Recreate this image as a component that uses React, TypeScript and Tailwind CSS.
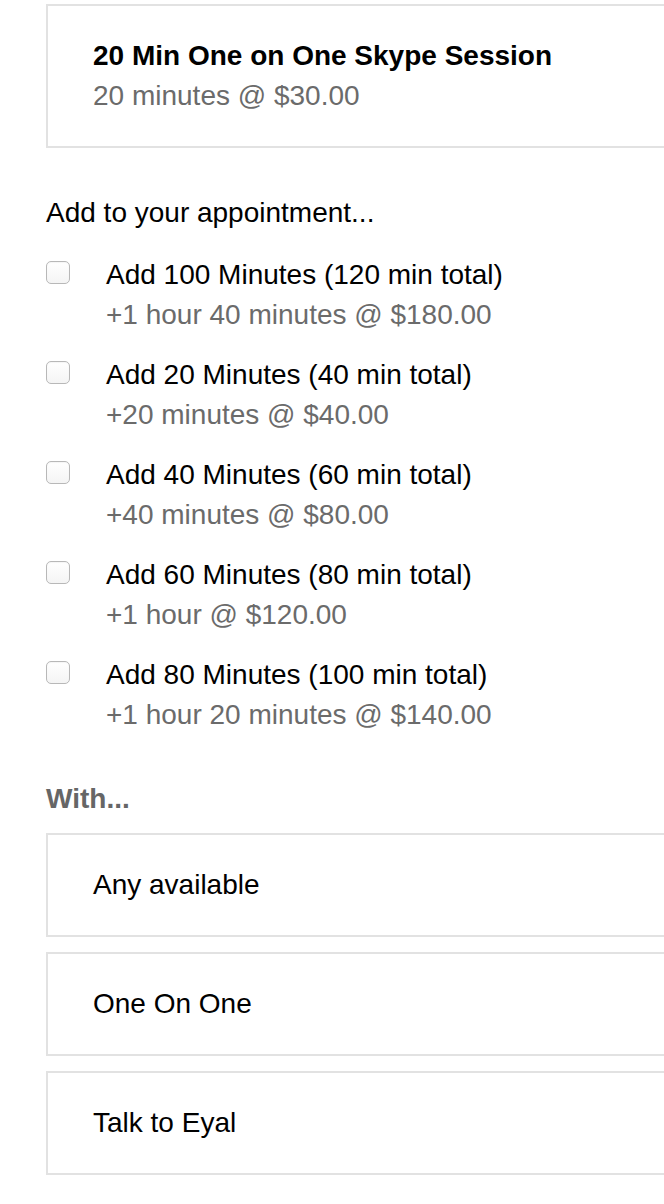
import React from "react";

const addons = [
  { label: "Add 100 Minutes (120 min total)", sub: "+1 hour 40 minutes @ $180.00" },
  { label: "Add 20 Minutes (40 min total)", sub: "+20 minutes @ $40.00" },
  { label: "Add 40 Minutes (60 min total)", sub: "+40 minutes @ $80.00" },
  { label: "Add 60 Minutes (80 min total)", sub: "+1 hour @ $120.00" },
  { label: "Add 80 Minutes (100 min total)", sub: "+1 hour 20 minutes @ $140.00" },
];

const staff = ["Any available", "One On One", "Talk to Eyal"];

export default function App() {
  return (
    <div
      className="w-[664px] min-h-[1204px] overflow-hidden bg-white text-[28px] leading-[40px] text-[#111]"
      style={{ fontFamily: '"Liberation Sans", Arial, Helvetica, sans-serif' }}
    >
      <div className="pl-[46px] pt-[4px]">
        <div className="mr-[-40px] border-2 border-[#e2e2e2] pl-[45px] py-[30px]">
          <div className="font-bold text-black">20 Min One on One Skype Session</div>
          <div className="text-[#6b6b6b]">20 minutes @ $30.00</div>
        </div>

        <div className="mt-[45px] text-black">Add to your appointment...</div>

        <div className="mt-[22px] flex flex-col gap-[20px]">
          {addons.map((a) => (
            <div key={a.label} className="flex items-start">
              <div className="mt-[6px] h-[23px] w-[24px] shrink-0 rounded-[5px] border border-[#b8b8b8] bg-gradient-to-b from-white to-[#f4f4f4] shadow-[inset_0_1px_1px_rgba(0,0,0,0.04)]" />
              <div className="ml-[36px]">
                <div className="text-black">{a.label}</div>
                <div className="text-[#6b6b6b]">{a.sub}</div>
              </div>
            </div>
          ))}
        </div>

        <div className="mt-[44px] font-bold text-[#666]">With...</div>

        <div className="mt-[14px] flex flex-col gap-[15px]">
          {staff.map((s) => (
            <div key={s} className="mr-[-40px] border-2 border-[#e2e2e2] pl-[45px] py-[30px] text-black">
              {s}
            </div>
          ))}
        </div>
      </div>
    </div>
  );
}
